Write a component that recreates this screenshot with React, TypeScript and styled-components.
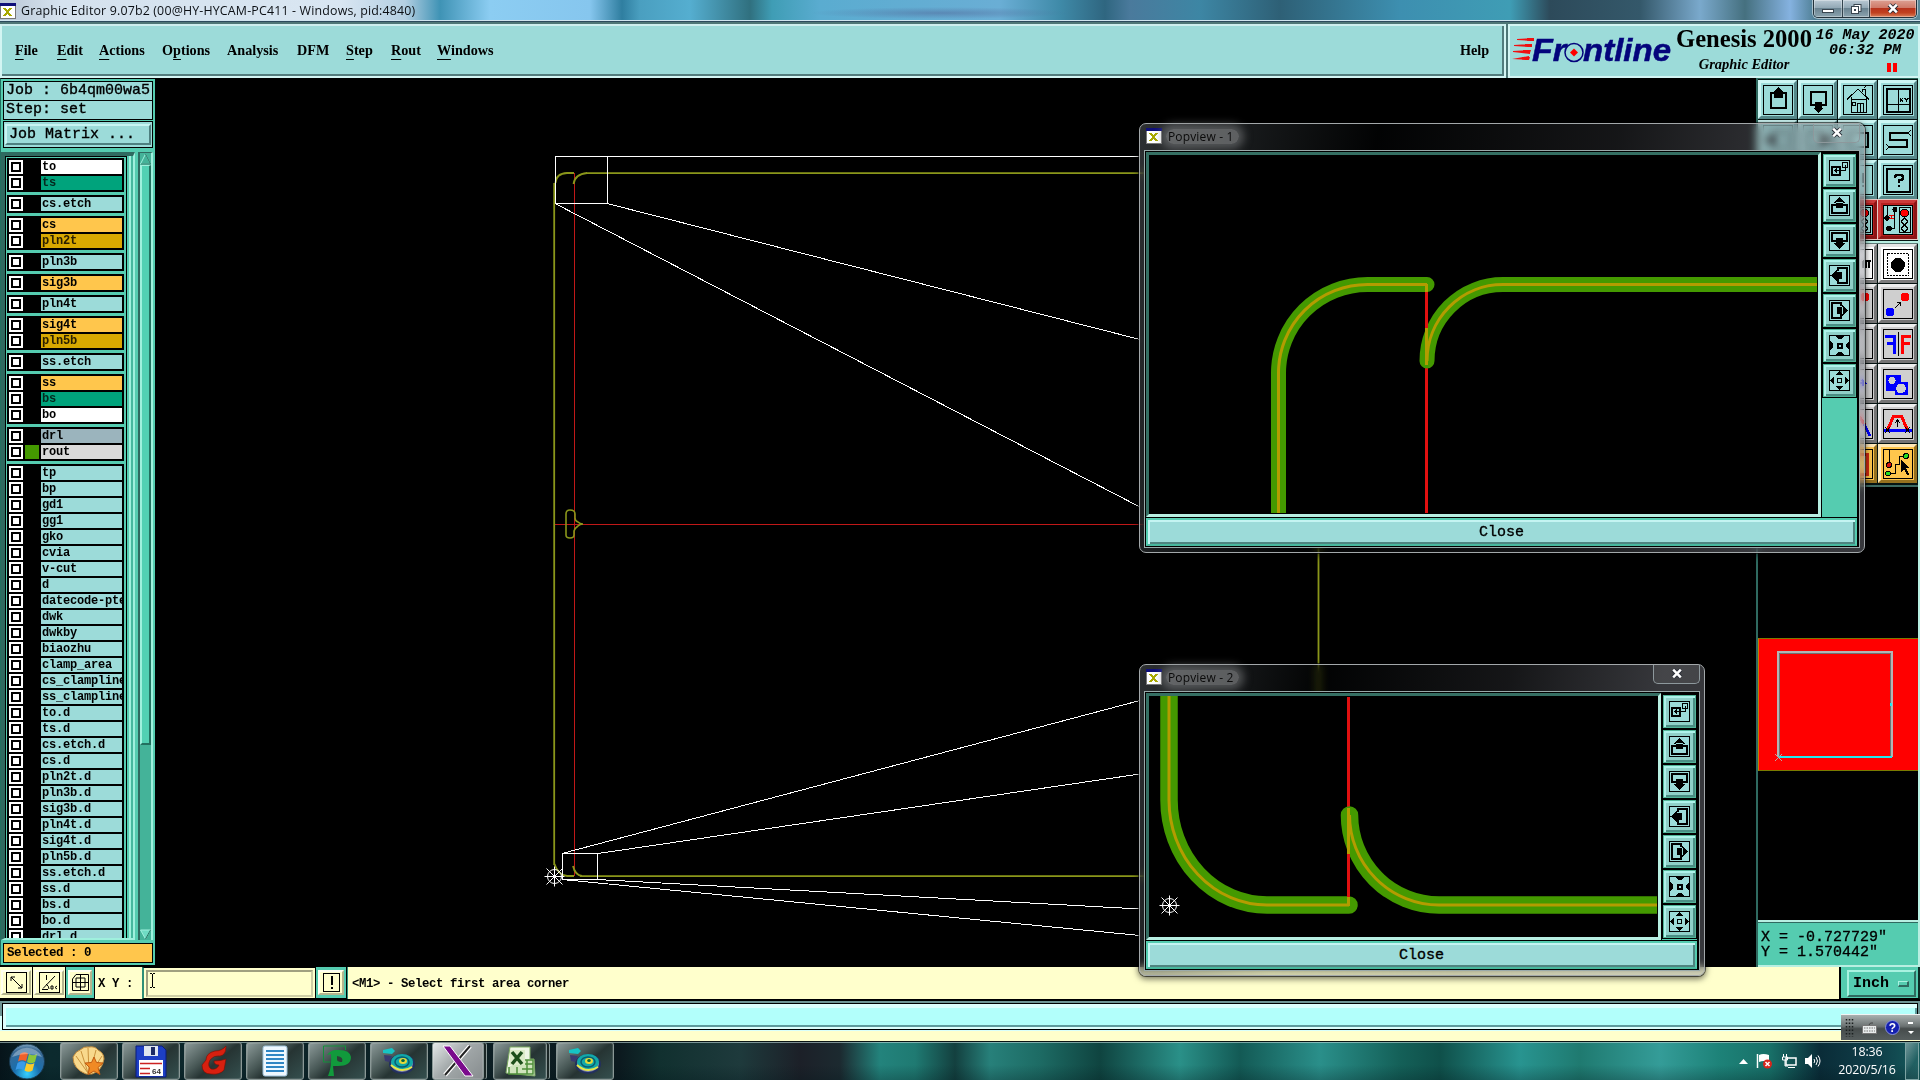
import React from 'react';
import styled, { createGlobalStyle, css } from 'styled-components';

const TEAL = '#55ccb0';
const FACE = '#9cdbd9';
const DARK = '#2f6a60';
const CREAM = '#ffffcc';
const ROUTE = '#449900';
const CORE = '#b39c00';

const Global = createGlobalStyle`
  html, body { margin: 0; padding: 0; background: #000; overflow: hidden; }
  * { box-sizing: border-box; }
  svg { display: block; flex: none; }
`;

const mono = css`font-family: 'Liberation Mono', 'DejaVu Sans Mono', monospace; white-space: pre;`;
const serif = css`font-family: 'Liberation Serif', serif; white-space: pre;`;
const ui = css`font-family: 'Open Sans', 'Noto Sans', sans-serif; white-space: pre;`;

const Screen = styled.div`
  position: relative;
  width: 1920px;
  height: 1080px;
  display: flex;
  flex-direction: column;
  overflow: hidden;
  background: #000;
  color: #000;
`;

/* ---------- title bar ---------- */
const TitleBar = styled.header`
  height: 22px;
  flex: none;
  display: flex;
  align-items: flex-start;
  justify-content: space-between;
  padding: 0 3px 0 0;
  border-bottom: 1px solid #2b4a5c;
  box-shadow: inset 0 -1px 0 #cfe4ee;
  background:
    radial-gradient(ellipse 130px 6px at 940px 13px, rgba(80, 100, 150, 0.5), transparent),
    linear-gradient(90deg, #b9c6d6 0, #d5e2ee 60px, #d9e6f2 340px, #b4cfe2 405px, #3f93b5 440px, #8ccdf2 490px, #86c6ee 590px,
      #2f7ea0 622px, #4a9fc0 640px, #55aed0 690px, #30707f 750px, #3f9db5 772px, #5aacd0 820px, #6aaed5 1000px,
      #3f8aa8 1060px, #2f6680 1105px, #4a7a9c 1130px, #3d86a4 1200px, #2e6076 1280px, #3d8fb0 1400px, #3f9db5 1510px, #2d4a5a 1550px,
      #34586a 1640px, #7aa9cc 1700px, #45707f 1745px, #85b2e0 1790px, #4f7f95 1815px, #5a8898 1920px);
`;
const TitleText = styled.div`
  ${ui}
  display: flex;
  align-items: center;
  gap: 5px;
  height: 21px;
  font-size: 12.4px;
  color: #0b0f14;
  letter-spacing: 0.17px;
`;
const Controls = styled.div`
  display: flex;
  height: 18px;
  border: 1px solid #23323b;
  border-top: 0;
  border-radius: 0 0 5px 5px;
  overflow: hidden;
  box-shadow: 0 0 0 1px rgba(255, 255, 255, 0.5);
`;
const Control = styled.div<{ $w: number; $close?: boolean }>`
  width: ${p => p.$w}px;
  display: flex;
  align-items: center;
  justify-content: center;
  border-right: ${p => (p.$close ? '0' : '1px solid #33444e')};
  box-shadow: inset 0 0 0 1px rgba(255, 255, 255, 0.35);
  background: ${p => (p.$close
    ? 'linear-gradient(#dda193 0, #cf7a68 45%, #b8341c 50%, #c0401f 75%, #d9805a 100%)'
    : 'linear-gradient(#b9c9d4 0, #93a9b6 45%, #6a8391 50%, #8ba3ae 100%)')};
`;

/* ---------- menu bar ---------- */
const MenuRow = styled.div`
  height: 56px;
  flex: none;
  display: flex;
  background: #4e7676;
`;
const MenuPanel = styled.nav`
  width: 1506px;
  display: flex;
  align-items: center;
  padding: 0 10px 2px 13px;
  background: ${FACE};
  border: 2px solid #d3f5f3;
  border-top-color: #cdeeee;
  margin-top: 2px;
  box-shadow: inset -2px -2px 0 #527c7d;
`;
const MenuItem = styled.div<{ $w: number }>`
  ${serif}
  width: ${p => p.$w}px;
  flex: none;
  font-size: 14.2px;
  font-weight: bold;
  line-height: 18px;
  u { text-decoration: underline; text-underline-offset: 4px; text-decoration-thickness: 1px; }
`;
const HelpItem = styled(MenuItem)`
  margin-left: auto;
`;
const Brand = styled.div`
  flex: 1;
  display: flex;
  margin-top: 2px;
  margin-left: 2px;
  background: ${FACE};
  border: 2px solid #d3f5f3;
`;
const Product = styled.div`
  ${serif}
  width: 136px;
  display: flex;
  flex-direction: column;
  align-items: center;
  font-weight: bold;
`;
const ProductName = styled.div`
  font-size: 24.6px;
  line-height: 25px;
`;
const ProductSub = styled.div`
  font-size: 14.5px;
  font-style: italic;
  line-height: 18px;
  margin-top: 4px;
`;
const Clock = styled.div`
  ${mono}
  flex: 1;
  display: flex;
  flex-direction: column;
  align-items: center;
  font-size: 15px;
  font-style: italic;
  font-weight: bold;
  line-height: 15px;
  padding-top: 2px;
`;
const Pause = styled.div`
  display: flex;
  gap: 2px;
  align-self: flex-end;
  margin: 5px 21px 0 0;
  i { width: 4px; height: 9px; background: #f00; }
`;

/* ---------- work area ---------- */
const Work = styled.main`
  height: 889px;
  flex: none;
  display: flex;
`;
const Sidebar = styled.aside`
  width: 155px;
  height: 887px;
  flex: none;
  display: flex;
  flex-direction: column;
  background: ${TEAL};
  border-left: 1px solid #237060;
  padding: 2px 2px 2px 2px;
  border-top: 1px solid #000;
`;
const InfoBox = styled.div`
  ${mono}
  height: 20px;
  flex: none;
  margin-bottom: -1px;
  border: 1px solid #000;
  background: ${FACE};
  font-size: 15px;
  line-height: 18px;
  padding-left: 2px;
  -webkit-text-stroke: 0.35px #000;
`;
const MatrixBox = styled.div`
  height: 27px;
  flex: none;
  margin-top: 2px;
  border: 1px solid #000;
  padding: 2px 1px;
  background: ${FACE};
`;
const MatrixButton = styled.div`
  ${mono}
  height: 21px;
  border: 2px solid;
  border-color: #c8f4f2 #4e8080 #4e8080 #c8f4f2;
  font-size: 15px;
  line-height: 18px;
  padding-left: 2px;
  -webkit-text-stroke: 0.35px #000;
`;
const ListRow = styled.div`
  display: flex;
  height: 788px;
  flex: none;
  margin-top: 4px;
  margin-left: -2px;
`;
const ListFrame = styled.div`
  width: 134px;
  flex: none;
  border-left: 4px solid ${DARK};
  border-top: 4px solid ${DARK};
  border-right: 2px solid #9ff0dd;
  border-bottom: 2px solid #9ff0dd;
  overflow: hidden;
  display: flex;
`;
const List = styled.div`
  width: 122px;
  flex: none;
  border: 1px solid #000;
  border-bottom: 0;
  padding: 1px 1px 0 1px;
  display: flex;
  flex-direction: column;
  gap: 3px;
`;
const ListEdge = styled.div`
  width: 6px;
  border-right: 2px solid #46b89e;
  box-shadow: inset 2px 0 0 ${TEAL}, inset 4px 0 0 #9ff0dd;
`;
const Group = styled.div`
  width: 117px;
  flex: none;
  background: #000;
  padding: 2px;
  display: flex;
  flex-direction: column;
  gap: 2px;
`;
const Row = styled.div`
  height: 14px;
  display: flex;
  gap: 2px;
`;
const Check = styled.div`
  width: 14px;
  height: 14px;
  border: 2px solid #fff;
  background: #fff;
  box-shadow: inset 0 0 0 2px #000;
`;
const Swatch = styled.div<{ $c?: string }>`
  width: 14px;
  height: 14px;
  background: ${p => p.$c ?? '#000'};
`;
const LayerName = styled.div<{ $bg: string; $fg?: string }>`
  ${mono}
  width: 81px;
  overflow: hidden;
  background: ${p => p.$bg};
  color: ${p => p.$fg ?? '#000'};
  font-size: 12px;
  font-weight: bold;
  letter-spacing: -0.2px;
  line-height: 14px;
  padding-left: 1px;
`;
const Scroll = styled.div`
  width: 15px;
  margin-left: 3px;
  border-left: 2px solid ${DARK};
  border-top: 1px solid ${DARK};
  border-right: 2px solid #9ff0dd;
  background: #44b399;
  display: flex;
  flex-direction: column;
`;
const Thumb = styled.div`
  height: 580px;
  background: #52d0b3;
  border: 2px solid;
  border-width: 1px 2px 2px 2px;
  border-color: #9ff0dd #237060 #237060 #9ff0dd;
`;
const Spacer = styled.div`
  flex: 1;
`;
const Selected = styled.div`
  ${mono}
  height: 20px;
  flex: none;
  margin-top: 3px;
  border: 1px solid #000;
  background: #ffc64c;
  font-size: 12.5px;
  font-weight: bold;
  letter-spacing: -0.5px;
  line-height: 19px;
  padding-left: 3px;
`;
const Canvas = styled.section`
  flex: 1;
  overflow: hidden;
`;
const RightPanel = styled.aside`
  width: 164px;
  flex: none;
  display: flex;
  flex-direction: column;
  border-left: 2px solid ${DARK};
  border-right: 2px solid #b8efe2;
`;
const ToolGrid = styled.div<{ $gray?: boolean }>`
  display: grid;
  flex: none;
  grid-template-columns: repeat(4, 39px);
  grid-auto-rows: 39px;
  gap: 1px;
  align-content: start;
  padding-top: ${p => (p.$gray ? 0 : 1)}px;
  background: #061412;
  border-top: 1px solid ${p => (p.$gray ? '#5d7a76' : DARK)};
  border-bottom: 2px solid ${p => (p.$gray ? '#3c6a62' : '#b8efe2')};
  height: ${p => (p.$gray ? 244 : 165)}px;
`;
type Tone = 'aqua' | 'red' | 'white' | 'gray' | 'gold';
const tones = {
  aqua: css`background: ${FACE}; border-color: #cdf6f4 #56888a #56888a #cdf6f4;`,
  red: css`background: #b81f1f; border-color: #cc3a3a #8c1414 #8c1414 #cc3a3a; box-shadow: inset 0 0 0 1px #b81f1f, 0 0 0 1px #e8c8c4;`,
  white: css`background: #fff; border-color: #e4e4e4 #7c7c7c #7c7c7c #e4e4e4;`,
  gray: css`background: #cfcfcf; border-color: #eeeeee #747474 #747474 #eeeeee;`,
  gold: css`background: #ffc64c; border-color: #ffe9b8 #96711f #96711f #ffe9b8;`,
};
const Tool = styled.div<{ $tone: Tone }>`
  ${p => tones[p.$tone]}
  width: 39px;
  height: 39px;
  border-style: solid;
  border-width: 3px;
  display: flex;
  align-items: center;
  justify-content: center;
`;
const Overview = styled.div`
  height: 133px;
  flex: none;
  margin-top: 151px;
  background: #f00;
  border: 1px solid #7a7a00;
  border-left-color: #c08000;
  border-right: 0;
`;
const Coords = styled.div`
  ${mono}
  margin-top: auto;
  height: 47px;
  background: ${TEAL};
  border-top: 2px solid #b8efe2;
  border-bottom: 2px solid #b8efe2;
  box-shadow: inset 0 1px 0 ${DARK};
  font-size: 15px;
  line-height: 15px;
  padding: 8px 0 0 3px;
  -webkit-text-stroke: 0.35px #000;
`;

/* ---------- command line ---------- */
const CommandRow = styled.div`
  height: 32px;
  flex: none;
  display: flex;
  background: ${CREAM};
  ${mono}
  font-size: 12.3px;
  font-weight: bold;
  letter-spacing: -0.38px;
`;
const CmdButton = styled.div<{ $w: number; $teal?: boolean }>`
  width: ${p => p.$w}px;
  height: 32px;
  flex: none;
  padding: ${p => (p.$teal ? '3px 2px' : '3px 1px')};
  background: ${p => (p.$teal ? TEAL : CREAM)};
  border: solid #000;
  border-width: 0 1px 1px 0;
`;
const CmdFace = styled.div`
  width: 100%;
  height: 100%;
  background: ${CREAM};
  border: 2px solid;
  border-color: #fffff0 #b5b58e #b5b58e #fffff0;
  display: flex;
  align-items: center;
  justify-content: center;
`;
const XYLabel = styled.div`
  width: 47px;
  padding: 10px 0 0 3px;
  line-height: 14px;
`;
const Entry = styled.div`
  width: 174px;
  border: 1px solid #000;
  border-left: 2px solid #2f8f78;
  padding: 2px;
`;
const EntryField = styled.div`
  height: 27px;
  border: 2px solid;
  border-color: #a0a080 #cfcfa6 #cfcfa6 #a0a080;
  padding: 0 0 0 1px;
`;
const Message = styled.div`
  flex: 1;
  padding: 10px 0 0 4px;
  line-height: 14px;
  border-left: 1px solid #2f8f78;
`;
const UnitBox = styled.div`
  width: 81px;
  background: ${TEAL};
  border-left: 2px solid #000;
  border-right: 2px solid #0a2a24;
  border-bottom: 1px solid #000;
  padding: 3px 2px 2px 6px;
`;
const UnitButton = styled.div`
  height: 27px;
  border: 2px solid;
  border-color: #a8f2e0 ${DARK} ${DARK} #a8f2e0;
  display: flex;
  align-items: center;
  gap: 9px;
  padding: 0 0 0 4px;
  font-size: 15px;
  letter-spacing: 0;
`;
const UnitMark = styled.i`
  width: 11px;
  height: 6px;
  border: 2px solid;
  border-width: 1px 2px 2px 1px;
  border-color: #a8f2e0 ${DARK} ${DARK} #a8f2e0;
`;
const StatusWrap = styled.div`
  height: 42px;
  flex: none;
  background: ${CREAM};
  border-top: 2px solid #000;
`;
const StatusOuter = styled.div`
  height: 30px;
  padding: 2px 2px 2px 2px;
  background: linear-gradient(#6e9494 50%, #d8fffb 50%);
`;
const StatusField = styled.div`
  height: 27px;
  background: #b2fffb;
  border: 1px solid #000;
  box-shadow: inset 0 4px 0 #dcfffd, inset 3px 0 0 #dcfffd, inset 0 -2px 0 #dcfffd, inset -2px -4px 0 #5e9a9c;
`;

/* ---------- popview windows ---------- */
const Popup = styled.div<{ $x: number; $y: number; $w: number; $h: number }>`
  position: absolute;
  left: ${p => p.$x}px;
  top: ${p => p.$y}px;
  width: ${p => p.$w}px;
  height: ${p => p.$h}px;
  display: flex;
  flex-direction: column;
  padding: 0 4px 4px 4px;
  border: 1px solid #a3a8aa;
  border-radius: 7px;
  background: linear-gradient(100deg, rgba(90, 95, 100, 0.5) 0, rgba(60, 66, 70, 0.42) 12%, rgba(10, 14, 16, 0.2) 30%, rgba(70, 72, 78, 0.3) 60%, rgba(130, 132, 142, 0.42) 85%);
  backdrop-filter: blur(4px) brightness(1.08);
  box-shadow: 0 0 0 1px rgba(0, 0, 0, 0.55), 0 2px 6px 1px rgba(0, 0, 0, 0.55);
`;
const PopTitle = styled.div`
  ${ui}
  height: 26px;
  flex: none;
  display: flex;
  justify-content: space-between;
  font-size: 12px;
`;
const PopCaption = styled.div`
  display: flex;
  align-items: center;
  gap: 4px;
  padding: 0 0 2px 2px;
  color: #0a0a0a;
  letter-spacing: 0.15px;
  span {
    padding: 0 6px 0 2px;
    line-height: 15px;
    border-radius: 8px;
    background: rgba(140, 142, 144, 0.6);
    box-shadow: 0 0 8px 5px rgba(140, 142, 144, 0.5);
  }
`;
const PopClose = styled.div`
  width: 47px;
  height: 19px;
  border: 1px solid #8d989c;
  border-top: 0;
  border-radius: 0 0 5px 5px;
  display: flex;
  align-items: center;
  justify-content: center;
  padding-bottom: 2px;
  background: rgba(255, 255, 255, 0.07);
`;
const PopBody = styled.div`
  flex: 1;
  border: 1px solid #9aa;
  background: #000;
  display: flex;
  flex-direction: column;
  padding: 1px 2px 1px 1px;
  gap: 1px;
`;
const PopMain = styled.div`
  flex: 1;
  display: flex;
  gap: 1px;
`;
const PopCanvas = styled.div`
  flex: 1;
  border: 3px solid;
  border-color: #356f63 #b8efe2 #b8efe2 #356f63;
  overflow: hidden;
`;
const PopTools = styled.div`
  width: 35px;
  display: flex;
  flex-direction: column;
  background: ${TEAL};
  border-top: 1px solid #000;
`;
const PopSlot = styled.div`
  height: 35px;
  flex: none;
  padding: 1px;
  background: #000;
`;
const PopTool = styled.div`
  width: 33px;
  height: 33px;
  border: 1px solid #52b598;
  box-shadow: inset 2px 2px 0 #aef3ea, inset -2px -2px 0 #4b8e84;
  background: #8fd0c8;
  padding: 5px;
  svg { background: ${FACE}; }
`;
const CloseBar = styled.div`
  ${mono}
  height: 28px;
  flex: none;
  border: 2px solid ${TEAL};
  border-bottom-color: #47b89e;
  background: ${FACE};
  box-shadow: inset 2px 2px 0 #c4f4f2, inset -2px -2px 0 #4e8480;
  display: flex;
  align-items: center;
  justify-content: center;
  font-size: 15px;
  -webkit-text-stroke: 0.35px #000;
`;

/* ---------- taskbar ---------- */
const Taskbar = styled.footer`
  ${ui}
  height: 39px;
  flex: none;
  display: flex;
  border-top: 1px solid #0a1414;
  box-shadow: inset 0 1px 0 rgba(190, 215, 215, 0.6);
  background:
    linear-gradient(transparent 60%, rgba(0, 20, 25, 0.25)),
    linear-gradient(90deg, #06141a 0, #0c2a2e 50px, #0d2226 400px, #0c1a1f 620px, #11302f 660px, #1e3a3c 740px, #1c2028 800px,
      #1c2a30 840px, #23837c 880px, #1f7a72 915px, #13403f 955px, #27807a 990px, #1d6b64 1040px, #0f4440 1100px,
      #2a9088 1180px, #135a55 1240px, #2a8f8a 1320px, #146058 1400px, #0f504a 1440px, #289490 1520px, #1f7a70 1580px,
      #349c98 1660px, #1d8278 1720px, #187068 1770px, #0a2c38 1820px, #10404a 1880px, #155b5c 1920px);
`;
const StartSlot = styled.div`
  width: 60px;
  flex: none;
  padding: 1px 0 0 8px;
`;
const TaskButtons = styled.div`
  display: flex;
  gap: 4px;
  flex: 1;
`;
const TaskButton = styled.div<{ $w?: number; $active?: boolean; $stack?: boolean }>`
  width: ${p => p.$w ?? 58}px;
  height: 38px;
  margin-right: ${p => (p.$stack ? 5 : 0)}px;
  border: 1px solid #8a9896;
  border-radius: 3px;
  box-shadow: inset 0 0 0 1px rgba(255, 255, 255, 0.12)${p => (p.$stack ? ', 3px 0 0 -1px #1a2625, 4px 0 0 -1px #8a9896' : '')};
  background: ${p => (p.$active
    ? 'linear-gradient(135deg, #e4e8e8 0, #a3a9aa 45%, #868c8e 100%)'
    : 'linear-gradient(140deg, #8d9b9a 0, #485856 38%, #263433 55%, #35504f 100%)')};
  display: flex;
  align-items: center;
  justify-content: center;
`;
const Tray = styled.div`
  display: flex;
  align-items: center;
  gap: 8px;
  padding-right: 8px;
`;
const TrayClock = styled.div`
  color: #fff;
  font-size: 12.4px;
  line-height: 18px;
  text-align: center;
  letter-spacing: -0.15px;
  width: 60px;
  margin-left: 8px;
  display: flex;
  flex-direction: column;
`;
const ShowDesktop = styled.div`
  width: 14px;
  height: 38px;
  margin-right: 1px;
  border: 1px solid #7ca3a3;
  background: linear-gradient(120deg, rgba(255, 255, 255, 0.4), rgba(255, 255, 255, 0.05) 60%);
`;
const LangBar = styled.div`
  position: absolute;
  left: 1841px;
  top: 1014px;
  width: 79px;
  height: 26px;
  display: flex;
  align-items: center;
  justify-content: space-between;
  padding: 0 6px 0 4px;
  border-top: 1px solid #f0f4f4;
  background: linear-gradient(#a9b0b0 0, #6b7272 45%, #464c4c 55%, #575e5e 100%);
`;

/* ---------- icons ---------- */
const AppIcon = () => (
  <svg width="16" height="16" viewBox="0 0 16 16" shapeRendering="crispEdges">
    <rect x=".5" y=".5" width="15" height="15" fill="#fff" stroke="#777" />
    <rect width="16" height="3" fill="#10107a" />
    <path d="M4 5L11 13M11 5L4 13" stroke="#a9a900" strokeWidth="2" />
  </svg>
);

const Cross = ({ size = 11 }: { size?: number }) => (
  <svg width={size} height={size - 1} viewBox="0 0 11 10">
    <path d="M2 1.5L9 8.5M9 1.5L2 8.5" stroke="#2b2f38" strokeWidth="4" />
    <path d="M2 1.5L9 8.5M9 1.5L2 8.5" stroke="#fff" strokeWidth="2.3" />
  </svg>
);

const popGlyphs: Record<string, React.ReactNode> = {
  pop: <><path d="M3 7h8v8H3z" fill="none" stroke="#000" strokeWidth="2" /><path d="M13.500 2.500h5v5h-5zM6 10.500h10.500V5M8 8.500L6 10.500L8 12.500" fill="none" stroke="#000" /></>,
  zin: <><path d="M8.500 8.500h4v4h-4z" fill="none" stroke="#000" strokeWidth="2" /><path d="M6 1h9l-3 3h-3zM6 20h9l-3-3h-3zM1 6v9l3-3v-3zM20 6v9l-3-3v-3z" /></>,
  zout: <><path d="M8.500 8.500h4v4h-4z" fill="none" stroke="#000" /><path d="M10.500 1l4 4h-8zM10.500 20l4-4h-8zM1 10.500l4-4v8zM20 10.500l-4-4v8z" /></>,
};
const boxes: Record<string, string> = {
  up: 'M7 10H3v8h15v-8h-4', down: 'M7 11H3V3h15v8h-4', left: 'M9 6V3h9v15H9v-4', right: 'M12 6V3H3v15h9v-4',
};
const heads: Record<string, string> = {
  up: 'M7 7h7v6H7zM10.500 1.500L5 8h11z', down: 'M7 8h7v6H7zM10.500 19.500L5 13h11z',
  left: 'M7 7h6v7H7zM1.500 10.500L8 5v11z', right: 'M8 7h6v7H8zM19.500 10.500L13 5v11z',
};
const PopIcon = ({ name }: { name: string }) => (
  <svg width="21" height="21" viewBox="0 0 21 21" shapeRendering="crispEdges">
    <rect x=".5" y=".5" width="20" height="20" fill="none" stroke="#000" />
    {boxes[name]
      ? <><path d={boxes[name]} fill="none" stroke="#000" strokeWidth="2" /><path d={heads[name]} /></>
      : popGlyphs[name]}
  </svg>
);

const traffic = (
  <>
    <rect x=".5" y=".5" width="29" height="29" fill={FACE} stroke="#000" />
    <path d="M11.500 5v18H6M4.500 1v12" fill="none" stroke="#000" />
    <circle cx="12" cy="4.500" r="2.500" /><circle cx="4" cy="13" r="2.700" /><circle cx="6" cy="23.500" r="2.700" />
    <path d="M6 10h5M6 13h5M8 10v4" stroke="#e00" fill="none" />
    <rect x="16" y="2.500" width="11" height="25" fill={FACE} stroke="#000" />
    <circle cx="21.500" cy="8" r="4" fill="#f00" stroke="#000" />
    <circle cx="21.500" cy="16.500" r="2.800" fill="none" stroke="#000" /><circle cx="21.500" cy="23.500" r="2.800" fill="none" stroke="#000" />
  </>
);
const toolGlyphs: Record<string, React.ReactNode> = {
  up: <><path d="M11 8H8v15h15V8h-3" fill="none" stroke="#000" strokeWidth="2" /><path d="M15.500 2L21 7.500h-1V13h-9V7.500h-1z" /></>,
  down: <><path d="M12 20H8V7h15v13h-4" fill="none" stroke="#000" strokeWidth="2" /><path d="M12 17h7v6h2l-5.500 5L10 23h2z" /></>,
  left: <><path d="M10 10V7h14v16H10v-3" fill="none" stroke="#000" strokeWidth="2" /><path d="M2 15l6-6v2h6v8H8v2z" /></>,
  right: <><path d="M20 10V7H6v16h14v-3" fill="none" stroke="#000" strokeWidth="2" /><path d="M28 15l-6-6v2h-6v8h6v2z" /></>,
  home: <path d="M4 14.500L15 4L26 14.500M8.500 12v15.500h15V12M8 14.500h16M9.500 17.500h3v3h-3zM14.500 27V18.500h6V27M17.500 19v8M19.500 7V4.500h3V10M21 3l2-2" fill="none" stroke="#000" />,
  xy: <><path d="M4 4h23v23H4z" fill="none" stroke="#000" strokeWidth="2" /><path d="M15.500 4v23M4 19.500h23M17 13l3 4M20 13l-3 4M21.500 13l2 2l2-2M23.500 15v2" fill="none" stroke="#000" /></>,
  rect: <path d="M6 8h19v14H6z" fill="none" stroke="#000" strokeWidth="2" />,
  snake: <><path d="M25 8H7v6.500h17V22H6" fill="none" stroke="#000" strokeWidth="2" /><path d="M25 8l3-3M25 8l3 3M6 22l-3-3M6 22l-3 3" stroke="#000" /></>,
  bang: <path d="M19 8h2v10h-2zM19 20h2v2h-2z" />,
  help: <><path d="M4 4h23v23H4z" fill="none" stroke="#000" strokeWidth="2" /><path d="M12 13v-2h1v-1h6v1h1v3h-1v1h-3v3M15 21h2" fill="none" stroke="#000" strokeWidth="2" /></>,
  traffic,
  comb: <path d="M20 12h8M20 19V12M23 19v-7M26 19v-7" stroke="#000" strokeWidth="2" />,
  pad: <><path d="M4.500 4.500h21v22h-21z" fill="none" stroke="#000" strokeDasharray="2 1" /><circle cx="15" cy="16" r="7" /></>,
  red: <circle cx="22" cy="8" r="4.500" fill="#f00" />,
  move: <><circle cx="22" cy="8" r="4.500" fill="#f00" /><circle cx="7" cy="23" r="4.500" fill="#00f" /><path d="M12 19l5-5M14 13.500h3.500V17" fill="none" stroke="#000" /></>,
  blank: null,
  mirror: <><path d="M2 7h9.500v18M4 14h7" fill="none" stroke="#00f" strokeWidth="3" /><path d="M28 7h-8.500v18M27 14h-7" fill="none" stroke="#f00" strokeWidth="3" /><path d="M15.500 3v24" stroke="#000" /></>,
  gap: <path d="M14 14h8l-3-3M22 14l-3 3" fill="none" stroke="#00f" strokeWidth="2" />,
  holes: <><path d="M3 6h15v7h7v13H12v-4H3z" fill="#00f" /><circle cx="9" cy="11.500" r="3.600" fill="#cfcfcf" /><circle cx="18" cy="19.500" r="4.800" fill="#cfcfcf" /></>,
  bend: <><path d="M15 6l7 10" stroke="#f00" strokeWidth="3" /><path d="M21 15l6 12" stroke="#00f" strokeWidth="3" /></>,
  bridge: <><path d="M5 20L10.500 7h8L24 20" fill="none" stroke="#f00" strokeWidth="3" /><path d="M1 21h28" stroke="#00f" strokeWidth="3" /><path d="M14.500 18v-6M12 14l2.500-3l2.500 3M2 18l5 6M7 18l-5 6M22 18l5 6M27 18l-5 6" fill="none" stroke="#000" /></>,
  frame: <path d="M6 5h18v20H6z" fill="none" stroke="#d02a12" strokeWidth="3" />,
  route: <><path d="M6.500 1v13M8 24.500h4.500V15.500h4V7.500h5" fill="none" stroke="#000" /><circle cx="6" cy="16" r="2.500" fill="#d01010" stroke="#000" /><circle cx="5" cy="24.500" r="2.500" fill="#2d2" stroke="#000" /><circle cx="23" cy="7" r="2.500" fill="#2d2" stroke="#000" /><path d="M18 11l8 8l-3 .5l3 6l-2 1l-3-6l-3 2.500z" /></>,
};
const ToolIcon = ({ name }: { name: string }) => (
  <svg width="30" height="30" viewBox="0 0 30 30" shapeRendering="crispEdges">
    <rect x=".5" y=".5" width="29" height="29" fill="none" stroke="#000" />
    {toolGlyphs[name]}
  </svg>
);

const Target = ({ x, y, r = 7 }: { x: number; y: number; r?: number }) => (
  <g stroke="#fff" fill="none" strokeWidth="1">
    <circle cx={x} cy={y} r={r} />
    <path d={`M${x - r - 3} ${y}h${2 * r + 6}M${x} ${y - r - 3}v${2 * r + 6}M${x - r - 1} ${y - r - 1}l${2 * r + 2} ${2 * r + 2}M${x + r + 1} ${y - r - 1}l${-2 * r - 2} ${2 * r + 2}`} />
  </g>
);

const Logo = () => (
  <svg width="166" height="50" viewBox="1511 26 166 50">
    <g fill="#f01010">
      <path d="M1518 39l17-1v3l-17-1zM1515 45l18-1v3l-18-1zM1514 51l17-1v4l-17-2zM1513 59l17-3v4zM1528 38h7l-1 3h-6zM1526 44h7l-1 3h-6zM1524 50h8l-1 3h-7zM1523 57h8l-1 3h-7z" />
    </g>
    <g fill="#04047c" fontFamily="'Liberation Sans', Arial, sans-serif" fontWeight="bold" fontStyle="italic" fontSize="32" stroke="#04047c" strokeWidth=".5">
      <text x="1533" y="61" textLength="34" lengthAdjust="spacingAndGlyphs">Fr</text>
      <text x="1584" y="61" textLength="88" lengthAdjust="spacingAndGlyphs">ntline</text>
    </g>
    <circle cx="1575" cy="52.500" r="9" fill={FACE} stroke="#04047c" strokeWidth="1.500" />
    <path d="M1575 48.500l4 4l-4 4l-4-4z" fill="#f00" />
  </svg>
);

/* ---------- taskbar icons ---------- */
const Orb = () => (
  <svg width="38" height="37" viewBox="0 0 38 37">
    <defs>
      <radialGradient id="orb" cx=".5" cy=".85" r=".9">
        <stop offset="0" stopColor="#35d0ff" /><stop offset=".4" stopColor="#1a6fae" /><stop offset=".8" stopColor="#3a6a94" /><stop offset="1" stopColor="#9ab8cc" />
      </radialGradient>
    </defs>
    <circle cx="19" cy="18.500" r="17.500" fill="url(#orb)" stroke="#17384e" />
    <path d="M12 11q4-3 8-.5l-2 8q-4-2.500-8 0z" fill="#f0602a" />
    <path d="M21 11q4 2.500 8 0l-2 8q-4 2.500-8 0z" fill="#8cc63a" />
    <path d="M9.500 20q4-3 8-.5l-2 7.500q-4-2.500-8 0z" fill="#3a9be8" />
    <path d="M18.500 20q4 2.500 8 0l-2 7.500q-4 2.500-8 0z" fill="#fccb2a" />
    <path d="M4 14a16 14 0 0 1 30 0q-15-6-30 0z" fill="#fff" opacity=".32" />
  </svg>
);
const Shell = () => (
  <svg width="34" height="32" viewBox="0 0 34 32">
    <path d="M14 29Q1 24 1 12Q4 6 8 5Q12 1 17 2Q23 1 26 5Q32 8 32 14Q30 26 20 29z" fill="#f8d98c" stroke="#c08a3c" />
    <path d="M16 28L4 11M16 28L9 6M17 28L16 3M18 28L24 5M19 28L30 11" stroke="#c9923c" fill="none" />
    <path d="M22 12l2.500 5.500l6.500 .5l-5 4.500l2 7l-6-3.500l-6 3.500l1.500-7l-4.500-4.500l6.500-.5z" fill="#f08a24" stroke="#c05a10" />
  </svg>
);
const Floppy = () => (
  <svg width="32" height="33" viewBox="0 0 32 33">
    <path d="M1 1h26l4 4v27H1z" fill="#1d3fc4" stroke="#0a1c7a" />
    <rect x="9" y="1" width="14" height="10" fill="#dfe6ee" /><rect x="16" y="2" width="4" height="8" fill="#1c2b66" />
    <rect x="4" y="15" width="24" height="16" fill="#fff" />
    <path d="M5 18.500h22M5 23.500h10M5 28.500h10" stroke="#c22" strokeWidth="1.500" />
    <text x="17" y="29" fontFamily="'Liberation Sans', sans-serif" fontSize="8" fontWeight="bold" fill="#333">64</text>
  </svg>
);
const Swirl = () => (
  <svg width="32" height="32" viewBox="0 0 32 32">
    <path d="M29 1q-4 5-11 5Q9 8 9 15L5 20q0 9 9 9q9 1 13-4l2-11q-5 2-12 2q0 4 5 4q-2 5-8 4q-4-3-1-9q4-5 10-4q6-1 6-9z" fill="#d8200f" stroke="#7a0d04" strokeWidth=".6" />
  </svg>
);
const Notes = () => (
  <svg width="28" height="32" viewBox="0 0 28 32">
    <rect x="2" y="1" width="24" height="30" rx="2" fill="#eef8ff" stroke="#9cc0d8" />
    <path d="M5 6h18M5 10h18M5 14h18M5 18h18M5 22h18M5 26h18" stroke="#2f86c4" strokeWidth="1.800" />
  </svg>
);
const PadsIcon = () => (
  <svg width="30" height="34" viewBox="0 0 30 34">
    <path d="M1.500 18V2h22v4M1.500 18h7" fill="none" stroke="#12903a" />
    <path d="M6 32Q10 22 9 10L5 11q4-5 9-5q14-1 15 7q0 9-13 9l-5 0l1 10z" fill="#119a3c" />
    <path d="M15 12q7 1 5 6q-4 0-5-2z" fill="#2c4038" />
  </svg>
);
const Disc = () => (
  <svg width="34" height="28" viewBox="0 0 34 28">
    <ellipse cx="20" cy="17" rx="12" ry="9" fill="#7c84b0" stroke="#23305e" strokeWidth="2" />
    <ellipse cx="20" cy="15" rx="11" ry="8" fill="#12a8a8" /><ellipse cx="20" cy="15" rx="7" ry="5" fill="none" stroke="#0a5c70" strokeWidth="1.500" />
    <path d="M9 18q10 9 21 2" fill="none" stroke="#e6e64a" strokeWidth="2" /><ellipse cx="21" cy="14" rx="4" ry="3" fill="#e6d83a" /><ellipse cx="21" cy="13.500" rx="1.800" ry="1.500" fill="#064" />
    <path d="M1 3l9-2l3 3l-3 3l-9-1z" fill="#17c4c4" /><path d="M2 8l8 1l-3 6l-4-1z" fill="#3a3a70" />
  </svg>
);
const XIcon = () => (
  <svg width="34" height="32" viewBox="0 0 34 32">
    <path d="M29 1L4 30" stroke="#fff" strokeWidth="4.500" /><path d="M29 1L4 30" stroke="#222" strokeWidth="2" />
    <path d="M2 1h7l23 30h-8z" fill="#7a0b8c" stroke="#fff" />
  </svg>
);
const Excel = () => (
  <svg width="32" height="32" viewBox="0 0 32 32">
    <path d="M6 2h20v12h4l1 17l-29-3z" fill="#eef6e4" stroke="#7cab62" />
    <path d="M18 15h11v14H5v-7" fill="#cfe4bc" stroke="#4f8f3a" strokeWidth="1.500" /><path d="M18 19h11M18 24h11M23 15v14M13 22v7" stroke="#4f8f3a" strokeWidth="1.500" />
    <rect x="6" y="5" width="15" height="15" fill="#dcebc8" /><path d="M8 7l10 12M18 7L8 19" stroke="#1d4f1a" strokeWidth="3.500" />
  </svg>
);

/* ---------- data ---------- */
const GOLD = '#ffc64c', OCHRE = '#d9a900', GREEN = '#00a37c';
type Layer = { n: string; bg?: string; sw?: string; fg?: string };
const groups: Layer[][] = [
  [{ n: 'to', bg: '#fff' }, { n: 'ts', bg: GREEN, fg: '#05281e' }],
  [{ n: 'cs.etch' }],
  [{ n: 'cs', bg: GOLD }, { n: 'pln2t', bg: OCHRE, fg: '#2b2000' }],
  [{ n: 'pln3b' }],
  [{ n: 'sig3b', bg: GOLD }],
  [{ n: 'pln4t' }],
  [{ n: 'sig4t', bg: GOLD }, { n: 'pln5b', bg: OCHRE, fg: '#2b2000' }],
  [{ n: 'ss.etch' }],
  [{ n: 'ss', bg: GOLD }, { n: 'bs', bg: GREEN, fg: '#05281e' }, { n: 'bo', bg: '#fff' }],
  [{ n: 'drl', bg: '#9bb4bd' }, { n: 'rout', bg: '#dadada', sw: ROUTE }],
  ('tp bp gd1 gg1 gko cvia v-cut d datecode-pte dwk dwkby biaozhu clamp_area cs_clampline ss_clampline to.d ts.d cs.etch.d cs.d ' +
    'pln2t.d pln3b.d sig3b.d pln4t.d sig4t.d pln5b.d ss.etch.d ss.d bs.d bo.d drl.d').split(' ').map(n => ({ n })),
];
// label, slot width, index of the underlined letter (-1 for none)
const menu: [string, number, number][] = [
  ['File', 42, 0], ['Edit', 42, 0], ['Actions', 63, 0], ['Options', 65, 1], ['Analysis', 70, -1],
  ['DFM', 49, -1], ['Step', 45, 0], ['Rout', 46, 0], ['Windows', 60, 0],
];
const upperTools: [string, Tone][] = [
  ['up', 'aqua'], ['down', 'aqua'], ['home', 'aqua'], ['xy', 'aqua'],
  ['left', 'aqua'], ['right', 'aqua'], ['rect', 'aqua'], ['snake', 'aqua'],
  ['up', 'aqua'], ['down', 'aqua'], ['bang', 'aqua'], ['help', 'aqua'],
  ['traffic', 'red'], ['traffic', 'red'], ['traffic', 'red'], ['traffic', 'red'],
];
const lowerTools: [string, Tone][] = [
  ['pad', 'white'], ['pad', 'white'], ['comb', 'white'], ['pad', 'white'],
  ['red', 'gray'], ['red', 'gray'], ['red', 'gray'], ['move', 'gray'],
  ['blank', 'gray'], ['mirror', 'gray'], ['blank', 'gray'], ['mirror', 'gray'],
  ['gap', 'gray'], ['gap', 'gray'], ['gap', 'gray'], ['holes', 'gray'],
  ['bend', 'gray'], ['bend', 'gray'], ['bend', 'gray'], ['bridge', 'gray'],
  ['frame', 'gold'], ['frame', 'gold'], ['frame', 'gold'], ['route', 'gold'],
];
const popTools = ['pop', 'up', 'down', 'left', 'right', 'zin', 'zout'];

const Popview = ({ title, x, y, w, h, children }: {
  title: string; x: number; y: number; w: number; h: number; children: React.ReactNode;
}) => (
  <Popup $x={x} $y={y} $w={w} $h={h}>
    <PopTitle>
      <PopCaption><AppIcon /><span>{title}</span></PopCaption>
      <PopClose><Cross size={12} /></PopClose>
    </PopTitle>
    <PopBody>
      <PopMain>
        <PopCanvas>{children}</PopCanvas>
        <PopTools>
          {popTools.map(t => <PopSlot key={t}><PopTool><PopIcon name={t} /></PopTool></PopSlot>)}
        </PopTools>
      </PopMain>
      <CloseBar>Close</CloseBar>
    </PopBody>
  </Popup>
);

const Track = ({ d, w }: { d: string[]; w: number }) => (
  <g fill="none">
    {d.map(s => <path key={s} d={s} stroke={ROUTE} strokeWidth={w} strokeLinecap="round" />)}
  </g>
);
const Cores = ({ d }: { d: string[] }) => (
  <g fill="none">{d.map(s => <path key={s} d={s} stroke={CORE} strokeWidth="3" />)}</g>
);

const pv1 = ['M1278.500 530V373A89 88.500 0 0 1 1367.500 284.500H1427', 'M1427 361A76 76.500 0 0 1 1503 284.500H1840'];
const pv2 = ['M1169 680V800A98 105 0 0 0 1267 905H1349', 'M1349.500 815A90 90 0 0 0 1439 905H1680'];

export default function App() {
  return (
    <Screen>
      <Global />
      <TitleBar>
        <TitleText><AppIcon />Graphic Editor 9.07b2 (00@HY-HYCAM-PC411 - Windows, pid:4840)</TitleText>
        <Controls>
          <Control $w={29}><svg width="12" height="10"><rect x=".5" y="5.500" width="11" height="3" fill="#fff" stroke="#3a4650" /></svg></Control>
          <Control $w={27}>
            <svg width="13" height="12"><rect x="4" y="1.500" width="7" height="7" fill="#fff" stroke="#3a4650" /><rect x="1.500" y="3.500" width="7" height="7" fill="#fff" stroke="#3a4650" /><rect x="4" y="6" width="2" height="2" fill="#3a4650" /></svg>
          </Control>
          <Control $w={46} $close><Cross size={12} /></Control>
        </Controls>
      </TitleBar>

      <MenuRow>
        <MenuPanel>
          {menu.map(([t, w, hot]) => (
            <MenuItem key={t} $w={w}>
              {hot < 0 ? t : <>{t.slice(0, hot)}<u>{t[hot]}</u>{t.slice(hot + 1)}</>}
            </MenuItem>
          ))}
          <HelpItem $w={34}>Help</HelpItem>
        </MenuPanel>
        <Brand>
          <Logo />
          <Product>
            <ProductName>Genesis 2000</ProductName>
            <ProductSub>Graphic Editor</ProductSub>
          </Product>
          <Clock>
            <div>16 May 2020</div>
            <div>06:32 PM</div>
            <Pause><i /><i /></Pause>
          </Clock>
        </Brand>
      </MenuRow>

      <Work>
        <Sidebar>
          <InfoBox>Job : 6b4qm00wa5</InfoBox>
          <InfoBox>Step: set</InfoBox>
          <MatrixBox><MatrixButton>Job Matrix ...</MatrixButton></MatrixBox>
          <ListRow>
            <ListFrame>
              <List>
                {groups.map((g, i) => (
                  <Group key={i}>
                    {g.map(l => (
                      <Row key={l.n}>
                        <Check />
                        <Swatch $c={l.sw} />
                        <LayerName $bg={l.bg ?? FACE} $fg={l.fg}>{l.n}</LayerName>
                      </Row>
                    ))}
                  </Group>
                ))}
              </List>
              <ListEdge />
            </ListFrame>
            <Scroll>
              <svg width="11" height="12"><path d="M5.500 1L10.500 11H.5z" fill="#44b399" stroke="#9ff0dd" /><path d="M5.500 1L10.500 11H1" fill="none" stroke="#237060" /></svg>
              <Thumb />
              <Spacer />
              <svg width="11" height="11"><path d="M5.500 10L.5 1h10z" fill="#6fdcc4" stroke="#9ff0dd" /><path d="M5.500 10L10.500 1" stroke="#237060" /></svg>
            </Scroll>
          </ListRow>
          <Selected>Selected : 0</Selected>
        </Sidebar>

        <Canvas>
          <svg width="1601" height="889" viewBox="155 78 1601 889">
            <g fill="none" stroke="#c01818" strokeWidth="1" shapeRendering="crispEdges">
              <path d="M574.500 173V876M554 524.500H1318" />
            </g>
            <g fill="none" stroke="#8a961a" strokeWidth="1.800">
              <path d="M554.200 183V865M586 173.200H1318.500V876.200H580" />
              <path d="M555.500 183Q556 173.500 567 173H574M573.500 184Q575 174 587 173M554.500 864Q558 875 567 876H574M573 866Q575 875 582 876" />
              <path d="M566 514q0-4 4-4q5 0 5 4v4q0 3 3 4q2 2 5 2q-3 0-5 2q-3 2-4 5v4q0 3-4 3q-4 0-4-3z" strokeWidth="1.600" />
            </g>
            <g fill="none" stroke="#fff" strokeWidth="1" shapeRendering="crispEdges">
              <path d="M555.500 203.500V156.500H1139M607.500 156.500V203.500H555.500M562.500 853.500h35v26h-35z" />
              <path d="M607 203.500L1140 339.500M555 203.500L1140 507M562 853.500L1140 700.500M598 853.500L1140 774M597 879.500L1140 909M562 879.500L1140 935.500" />
            </g>
            <Target x={554.5} y={876.5} />
          </svg>
        </Canvas>

        <RightPanel>
          <ToolGrid>
            {upperTools.map(([n, t], i) => <Tool key={i} $tone={t}><ToolIcon name={n} /></Tool>)}
          </ToolGrid>
          <ToolGrid $gray>
            {lowerTools.map(([n, t], i) => <Tool key={i} $tone={t}><ToolIcon name={n} /></Tool>)}
          </ToolGrid>
          <Overview>
            <svg width="158" height="131" viewBox="1759 639 158 131" fill="none">
              <path d="M1778 757V652H1892V757" stroke="#b4b4b4" strokeWidth="2" />
              <path d="M1779.500 756V653.500H1890.500V756" stroke="#6f7272" strokeWidth="1" />
              <path d="M1778 757H1892M1891 703v3" stroke="#20e8f0" strokeWidth="2" />
              <path d="M1775 754l7 7M1782 754l-7 7" stroke="#c0a0a0" />
            </svg>
          </Overview>
          <Coords>{'X = -0.727729"\nY = 1.570442"'}</Coords>
        </RightPanel>
      </Work>

      <CommandRow>
        <CmdButton $w={33}>
          <CmdFace><svg width="21" height="21" fill="none" stroke="#000"><rect x=".5" y=".5" width="20" height="20" /><path d="M5 5l11 11M5 9V5h4M16 12v4h-4" /></svg></CmdFace>
        </CmdButton>
        <CmdButton $w={33}>
          <CmdFace><svg width="21" height="21" fill="none" stroke="#000"><rect x=".5" y=".5" width="20" height="20" /><path d="M4 16.500L16 4M3 17.500h6M7 12q3 2 3 5M7.500 3v5M12 14h2v3h-2zM18 14l-2 1.500l2 1.500" /></svg></CmdFace>
        </CmdButton>
        <CmdButton $w={29} $teal>
          <CmdFace><svg width="19" height="19" fill="none" stroke="#000"><path d="M5 1.500h12.500v16H1.500V6zM9.500 2v15M2 9.500h15M5 5h9v9H5z" /></svg></CmdFace>
        </CmdButton>
        <XYLabel>X Y :</XYLabel>
        <Entry>
          <EntryField><svg width="7" height="17" stroke="#000"><path d="M1 1.500h2M4 1.500h2M3.500 2v13M1 15.500h2M4 15.500h2" /></svg></EntryField>
        </Entry>
        <CmdButton $w={31} $teal>
          <CmdFace><svg width="17" height="19"><rect x=".5" y=".5" width="16" height="18" fill="none" stroke="#000" /><path d="M8 3h2v9H8zM8 14h2v2H8z" /></svg></CmdFace>
        </CmdButton>
        <Message>{'<M1> - Select first area corner'}</Message>
        <UnitBox><UnitButton>Inch<UnitMark /></UnitButton></UnitBox>
      </CommandRow>
      <StatusWrap>
        <StatusOuter><StatusField /></StatusOuter>
      </StatusWrap>

      <Taskbar>
        <StartSlot><Orb /></StartSlot>
        <TaskButtons>
          <TaskButton><Shell /></TaskButton>
          <TaskButton><Floppy /></TaskButton>
          <TaskButton><Swirl /></TaskButton>
          <TaskButton><Notes /></TaskButton>
          <TaskButton><PadsIcon /></TaskButton>
          <TaskButton><Disc /></TaskButton>
          <TaskButton $w={52} $active $stack><XIcon /></TaskButton>
          <TaskButton $w={54} $stack><Excel /></TaskButton>
          <TaskButton><Disc /></TaskButton>
        </TaskButtons>
        <Tray>
          <svg width="9" height="5"><path d="M4.500 0L9 5H0z" fill="#fff" /></svg>
          <svg width="17" height="16"><path d="M1.500 1v14" stroke="#fff" strokeWidth="1.500" /><path d="M3 2q4-2 10 0v7q-5-2-10 0z" fill="#fff" /><circle cx="11.500" cy="11" r="4.500" fill="#d8261c" /><path d="M9.500 9l4 4M13.500 9l-4 4" stroke="#fff" strokeWidth="1.500" /></svg>
          <svg width="16" height="16" fill="none" stroke="#fff"><rect x="5" y="5" width="10" height="7" strokeWidth="1.500" /><path d="M7 14.500h7M2.500 1v3M5.500 1v3M1.500 4h5v3h-5zM4 7v6h3" /></svg>
          <svg width="16" height="14"><path d="M0 4h3l4-4v14l-4-4H0z" fill="#fff" /><path d="M9 5q1.500 2 0 4M11 3q3 4 0 8M13 1.500q4 5.500 0 11" fill="none" stroke="#fff" /></svg>
          <TrayClock><span>18:36</span><span>2020/5/16</span></TrayClock>
        </Tray>
        <ShowDesktop />
      </Taskbar>

      <LangBar>
        <svg width="9" height="18"><path d="M1.500 0v18M4.500 0v18M7.500 0v18" stroke="#1a1f1f" strokeWidth="1.500" strokeDasharray="1.500 2" /></svg>
        <svg width="15" height="13" fill="none"><path d="M7 4q1-3 4-2" stroke="#444" /><rect x=".5" y="4.500" width="14" height="8" fill="#e8ecec" stroke="#777" /><path d="M2 7h11M2 10h11" stroke="#777" strokeDasharray="1.500 1" /></svg>
        <svg width="15" height="15"><circle cx="7.500" cy="7.500" r="7" fill="#1420b0" stroke="#8a94d8" /><text x="7.500" y="12" textAnchor="middle" fontFamily="'Liberation Sans', sans-serif" fontWeight="bold" fontSize="12" fill="#fff">?</text></svg>
        <svg width="6" height="14" fill="#fff"><path d="M0 1h5v2H0zM0 10h6l-3 3z" /></svg>
      </LangBar>

      <Popview title="Popview - 1" x={1139} y={123} w={726} h={430}>
        <svg width="668" height="358" viewBox="1149 155 668 358">
          <path d="M1426.500 292V514" stroke="#e01010" strokeWidth="3" />
          <Track d={pv1} w={15} />
          <path d="M1426.500 292V328" stroke="#e01010" strokeWidth="3" />
          <Cores d={pv1} />
          <path d="M1426.500 284V292M1426.500 328V365" stroke={CORE} strokeWidth="3" />
        </svg>
      </Popview>

      <Popview title="Popview - 2" x={1139} y={664} w={566} h={312}>
        <svg width="508" height="241" viewBox="1149 696 508 241">
          <path d="M1348.500 697V897" stroke="#e01010" strokeWidth="3" />
          <Track d={pv2} w={17.5} />
          <path d="M1348.500 854V897" stroke="#e01010" strokeWidth="3" />
          <Cores d={pv2} />
          <path d="M1348.500 808V854M1348.500 897V906" stroke={CORE} strokeWidth="3" />
          <Target x={1169.5} y={905.5} />
        </svg>
      </Popview>
    </Screen>
  );
}
